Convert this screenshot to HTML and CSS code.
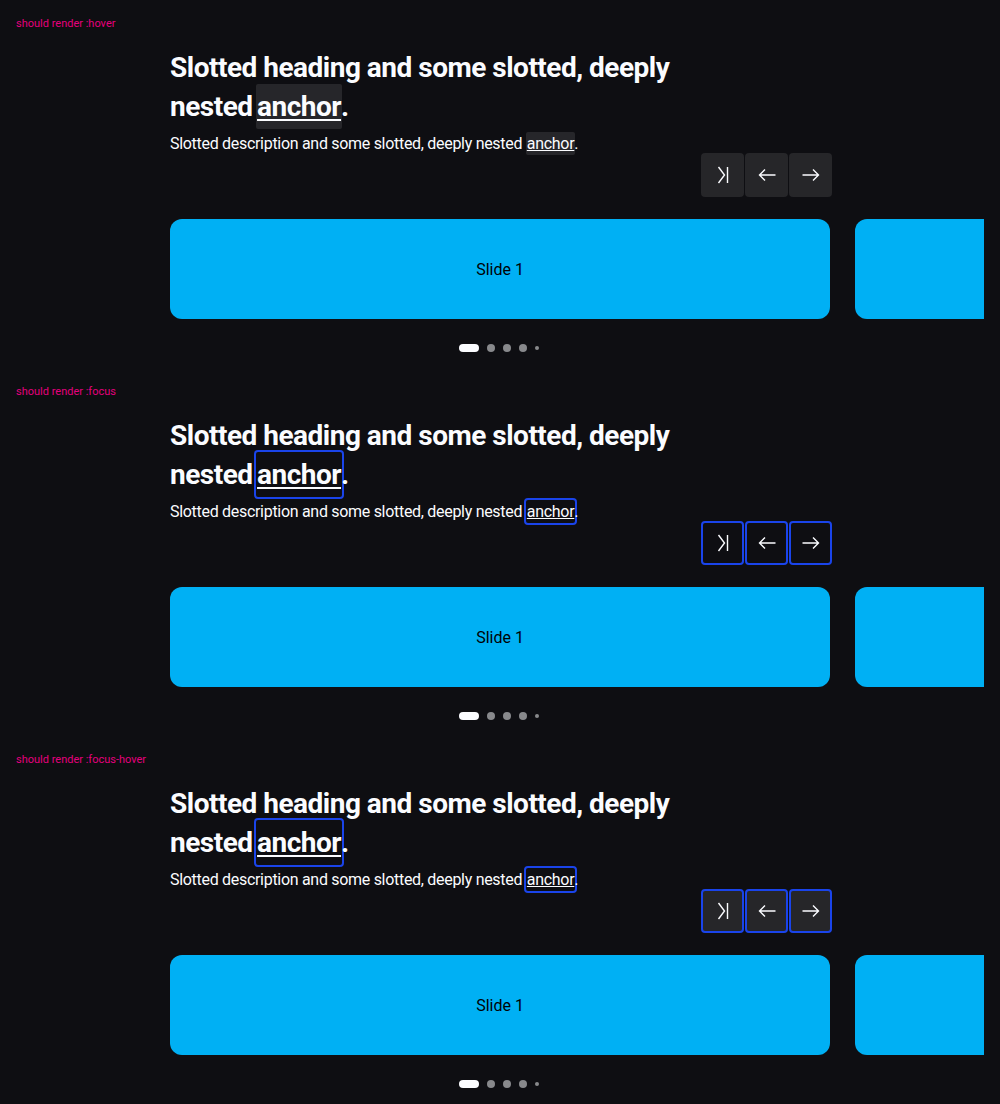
FILE: index.html
```html
<!DOCTYPE html>
<html lang="en">
<head>
<meta charset="utf-8">
<title>Carousel states</title>
<link rel="stylesheet" href="styles.css">
</head>
<body>
<div class="page">
  <section class="state">
    <p class="label">should render :hover</p>
    <div class="carousel">
      <div class="header">
        <h2 class="heading">Slotted heading and some slotted, deeply nested <a class="link link-lg is-hover" href="#">anchor</a>.</h2>
        <p class="desc">Slotted description and some slotted, deeply nested <a class="link link-sm is-hover" href="#">anchor</a>.</p>
      </div>
      <div class="controls">
        <button class="ctrl is-hover" aria-label="Skip"><svg viewBox="0 0 24 24" width="24" height="24"><path d="M7.5 4l6 8-6 8M16.5 4v16" fill="none" stroke="#fbfcff" stroke-width="1.4"/></svg></button>
        <button class="ctrl is-hover" aria-label="Previous"><svg viewBox="0 0 24 24" width="24" height="24"><path d="M20.5 12H4.5M10 6.5L4.5 12l5.5 5.5" fill="none" stroke="#fbfcff" stroke-width="1.4"/></svg></button>
        <button class="ctrl is-hover" aria-label="Next"><svg viewBox="0 0 24 24" width="24" height="24"><path d="M3.5 12h16M14 6.5l5.5 5.5-5.5 5.5" fill="none" stroke="#fbfcff" stroke-width="1.4"/></svg></button>
      </div>
      <div class="track">
        <div class="slide">Slide 1</div>
        <div class="slide">Slide 2</div>
      </div>
      <div class="pagination"><span class="dot active"></span><span class="dot"></span><span class="dot"></span><span class="dot"></span><span class="dot small"></span></div>
    </div>
  </section>

  <section class="state">
    <p class="label">should render :focus</p>
    <div class="carousel">
      <div class="header">
        <h2 class="heading">Slotted heading and some slotted, deeply nested <a class="link link-lg is-focus" href="#">anchor</a>.</h2>
        <p class="desc">Slotted description and some slotted, deeply nested <a class="link link-sm is-focus" href="#">anchor</a>.</p>
      </div>
      <div class="controls">
        <button class="ctrl is-focus" aria-label="Skip"><svg viewBox="0 0 24 24" width="24" height="24"><path d="M7.5 4l6 8-6 8M16.5 4v16" fill="none" stroke="#fbfcff" stroke-width="1.4"/></svg></button>
        <button class="ctrl is-focus" aria-label="Previous"><svg viewBox="0 0 24 24" width="24" height="24"><path d="M20.5 12H4.5M10 6.5L4.5 12l5.5 5.5" fill="none" stroke="#fbfcff" stroke-width="1.4"/></svg></button>
        <button class="ctrl is-focus" aria-label="Next"><svg viewBox="0 0 24 24" width="24" height="24"><path d="M3.5 12h16M14 6.5l5.5 5.5-5.5 5.5" fill="none" stroke="#fbfcff" stroke-width="1.4"/></svg></button>
      </div>
      <div class="track">
        <div class="slide">Slide 1</div>
        <div class="slide">Slide 2</div>
      </div>
      <div class="pagination"><span class="dot active"></span><span class="dot"></span><span class="dot"></span><span class="dot"></span><span class="dot small"></span></div>
    </div>
  </section>

  <section class="state">
    <p class="label">should render :focus-hover</p>
    <div class="carousel">
      <div class="header">
        <h2 class="heading">Slotted heading and some slotted, deeply nested <a class="link link-lg is-focus" href="#">anchor</a>.</h2>
        <p class="desc">Slotted description and some slotted, deeply nested <a class="link link-sm is-focus" href="#">anchor</a>.</p>
      </div>
      <div class="controls">
        <button class="ctrl is-focus is-hover" aria-label="Skip"><svg viewBox="0 0 24 24" width="24" height="24"><path d="M7.5 4l6 8-6 8M16.5 4v16" fill="none" stroke="#fbfcff" stroke-width="1.4"/></svg></button>
        <button class="ctrl is-focus is-hover" aria-label="Previous"><svg viewBox="0 0 24 24" width="24" height="24"><path d="M20.5 12H4.5M10 6.5L4.5 12l5.5 5.5" fill="none" stroke="#fbfcff" stroke-width="1.4"/></svg></button>
        <button class="ctrl is-focus is-hover" aria-label="Next"><svg viewBox="0 0 24 24" width="24" height="24"><path d="M3.5 12h16M14 6.5l5.5 5.5-5.5 5.5" fill="none" stroke="#fbfcff" stroke-width="1.4"/></svg></button>
      </div>
      <div class="track">
        <div class="slide">Slide 1</div>
        <div class="slide">Slide 2</div>
      </div>
      <div class="pagination"><span class="dot active"></span><span class="dot"></span><span class="dot"></span><span class="dot"></span><span class="dot small"></span></div>
    </div>
  </section>
</div>
</body>
</html>
```

FILE: styles.css
```css
html, body {
  margin: 0;
  padding: 0;
  background: #0e0e12;
}
body {
  font-family: Roboto, "Liberation Sans", sans-serif;
  color: #fbfcff;
}
.page {
  padding: 16px 16px 0 16px;
  overflow: hidden;
}
.state {
  height: 368px;
}
.label {
  margin: 0;
  padding-top: 1px;
  font-size: 11px;
  line-height: 14px;
  color: #e5007d;
}
.carousel {
  margin-top: 17px;
  padding-left: 154px;
  overflow: hidden;
}
.header {
  width: 660px;
}
.heading {
  margin: 0;
  font-size: 28px;
  line-height: 39px;
  font-weight: 700;
  letter-spacing: -0.5px;
  max-width: 560px;
}
.desc {
  margin: 6px 0 0 0;
  font-size: 16px;
  line-height: 24px;
  font-weight: 400;
  letter-spacing: -0.3px;
}
.link {
  color: #fbfcff;
  text-decoration: underline;
  border-radius: 4px;
  border: 2px solid transparent;
  background-clip: padding-box;
}
.link-lg {
  text-decoration-thickness: 2px;
  text-underline-offset: 3px;
  padding: 6px 1px;
  margin: 0 -3px 0 -5px;
}
.link-sm {
  text-decoration-thickness: 1px;
  padding: 2px 1px;
  margin: 0 -3px 0 -2px;
}
.link.is-hover {
  background-color: #26262a;
}
.link.is-focus {
  border-color: #1a44ea;
}
.controls {
  width: 662px;
  margin-top: -3px;
  display: flex;
  justify-content: flex-end;
  gap: 1px;
}
.ctrl {
  box-sizing: border-box;
  width: 43px;
  height: 44px;
  padding: 0;
  margin: 0;
  border: 2px solid transparent;
  border-radius: 4px;
  background: transparent;
  display: flex;
  align-items: center;
  justify-content: center;
}
.ctrl.is-hover {
  background: #262629;
}
.ctrl.is-focus {
  border-color: #1a44ea;
}
.track {
  margin-top: 22px;
  display: flex;
  gap: 25px;
}
.slide {
  flex: 0 0 660px;
  height: 100px;
  border-radius: 12px;
  background: #00b0f4;
  color: #010205;
  display: flex;
  align-items: center;
  justify-content: center;
  font-size: 16px;
}
.pagination {
  width: 657px;
  margin-top: 25px;
  height: 8px;
  display: flex;
  justify-content: center;
  align-items: center;
  gap: 8px;
}
.dot {
  width: 8px;
  height: 8px;
  border-radius: 4px;
  background: #88898c;
}
.dot.active {
  width: 20px;
  background: #fbfcff;
}
.dot.small {
  width: 4px;
  height: 4px;
  border-radius: 2px;
}
```
